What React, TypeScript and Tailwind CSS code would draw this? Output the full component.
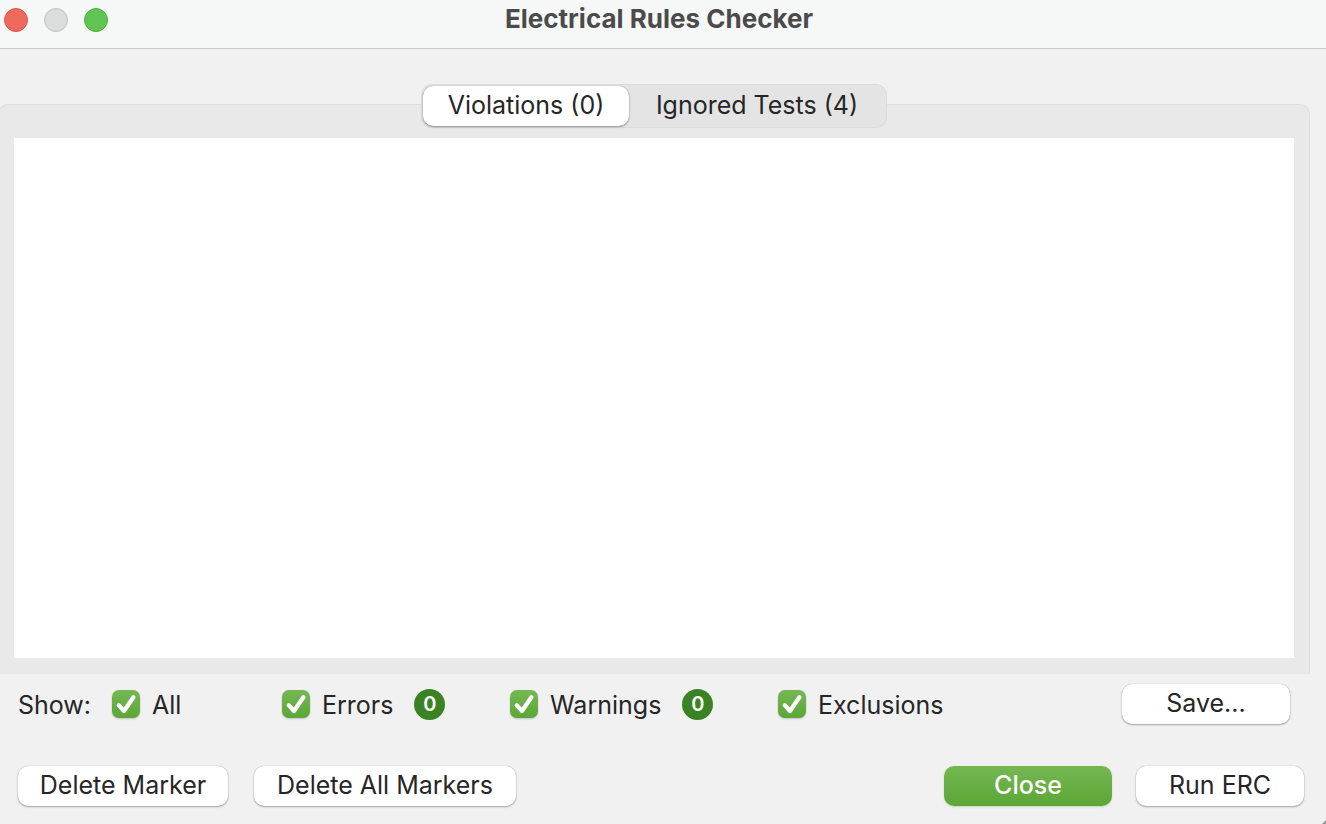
import { useState } from "react";
import type { ReactNode } from "react";
import clsx from "clsx";

type Filter = "All" | "Errors" | "Warnings" | "Exclusions";

const filters: { name: Filter; count?: number; width: string }[] = [
  { name: "All", width: "w-[170px]" },
  { name: "Errors", count: 0, width: "w-[228px]" },
  { name: "Warnings", count: 0, width: "w-[268px]" },
  { name: "Exclusions", width: "w-auto" },
];

const tabs = [
  { label: "Violations (0)", width: "w-[206px]" },
  { label: "Ignored Tests (4)", width: "w-[256px]" },
];

function CheckBox({ name, checked, onChange }: { name: string; checked: boolean; onChange: () => void }) {
  return (
    <label className="flex items-center gap-3">
      <span className="relative flex size-7">
        <input
          type="checkbox"
          name={name}
          checked={checked}
          onChange={onChange}
          className="size-7 appearance-none rounded-[7px] bg-white shadow-[0_1px_2px_rgba(0,0,0,0.2)] checked:bg-linear-to-b checked:from-[#75b852] checked:to-[#5ca636]"
        />
        {checked && (
          <svg viewBox="0 0 28 28" className="pointer-events-none absolute inset-0 size-7" aria-hidden="true">
            <path d="M6.7 15.2 12 21 21.4 7.2" fill="none" stroke="#fff" strokeWidth="4.2" strokeLinecap="round" strokeLinejoin="round" />
          </svg>
        )}
      </span>
      <span className="pt-0.5 leading-8">{name}</span>
    </label>
  );
}

function PushButton({ children, primary, className }: { children: ReactNode; primary?: boolean; className: string }) {
  return (
    <button
      type="button"
      className={clsx(
        "flex h-10 items-center justify-center rounded-[10px]",
        primary
          ? "bg-linear-to-b from-[#75b852] to-[#5ca636] font-medium text-white shadow-[0_1px_2px_rgba(92,166,54,0.3)]"
          : "bg-white shadow-[0_0_1px_rgba(0,0,0,0.35),0_1px_2px_rgba(0,0,0,0.3)]",
        className,
      )}
    >
      {children}
    </button>
  );
}

export default function App() {
  const [tab, setTab] = useState(0);
  const [shown, setShown] = useState<Filter[]>(["All", "Errors", "Warnings", "Exclusions"]);
  const toggle = (name: Filter) =>
    setShown((list) => (list.includes(name) ? list.filter((item) => item !== name) : [...list, name]));

  return (
    <div className="relative flex min-h-screen flex-col overflow-hidden bg-[#f1f1f1] font-['Inter',sans-serif] text-[25px] text-[#262626]">
      <header className="grid grid-cols-[1fr_auto_1fr] items-start border-b border-[#c9cbca] bg-[#f6f8f7] pb-2">
        <div className="flex gap-4 pt-2 pl-1">
          <button type="button" aria-label="Close window" className="size-6 rounded-full border border-[#d8584c] bg-[#ec6a5e]" />
          <button type="button" aria-label="Minimize window" disabled className="size-6 rounded-full border border-[#bdbfbe] bg-[#dcdedd]" />
          <button type="button" aria-label="Zoom window" className="size-6 rounded-full border border-[#4fae3c] bg-[#61c554]" />
        </div>
        <h1 className="pr-2 pb-0.5 text-[26px] leading-[38px] font-bold text-[#4b4b4b]">Electrical Rules Checker</h1>
      </header>

      <main className="mt-[35px] mr-4 -ml-0.5 flex flex-1 flex-col">
        <div role="tablist" className="z-10 -mb-6 flex self-center rounded-[11px] border border-[#dadcdb] bg-[#e4e4e4] p-px">
          {tabs.map(({ label, width }, index) => (
            <button
              key={label}
              type="button"
              role="tab"
              aria-selected={tab === index}
              onClick={() => setTab(index)}
              className={clsx(
                "flex h-10 items-center justify-center rounded-[10px]",
                width,
                tab === index && "bg-white shadow-[0_0_1px_rgba(0,0,0,0.4),0_1px_2px_rgba(0,0,0,0.35)]",
              )}
            >
              {label}
            </button>
          ))}
        </div>
        <section className="flex flex-1 flex-col rounded-t-[10px] border border-b-0 border-[#dedede] bg-[#e9e9e9] px-[15px] pt-[33px] pb-4">
          <div role="tabpanel" aria-label={tabs[tab].label} className="flex-1 bg-white" />
        </section>
      </main>

      <footer className="flex flex-col gap-[42px] pt-[10px] pb-[18px] pl-[18px]">
        <div className="flex items-center justify-between pr-9">
          <div className="flex items-center">
            <span className="w-[94px] pt-0.5 leading-8">Show:</span>
            {filters.map(({ name, count, width }) => (
              <div key={name} className={clsx("flex items-center gap-[21px]", width)}>
                <CheckBox name={name} checked={shown.includes(name)} onChange={() => toggle(name)} />
                {count !== undefined && (
                  <span className="flex size-[31px] items-center justify-center rounded-full bg-[#3a8224] text-xl font-semibold text-white">
                    {count}
                  </span>
                )}
              </div>
            ))}
          </div>
          <PushButton className="w-[168px]">Save...</PushButton>
        </div>
        <div className="flex justify-between pr-[22px]">
          <div className="flex gap-[26px]">
            <PushButton className="w-[210px]">Delete Marker</PushButton>
            <PushButton className="w-[262px]">Delete All Markers</PushButton>
          </div>
          <div className="flex gap-6">
            <PushButton primary className="w-[168px]">Close</PushButton>
            <PushButton className="w-[168px]">Run ERC</PushButton>
          </div>
        </div>
      </footer>

      <svg viewBox="0 0 4 4" className="absolute right-0 bottom-0 size-1" aria-hidden="true">
        <path d="M4 0v4H0z" fill="#9a9a9a" />
      </svg>
    </div>
  );
}
